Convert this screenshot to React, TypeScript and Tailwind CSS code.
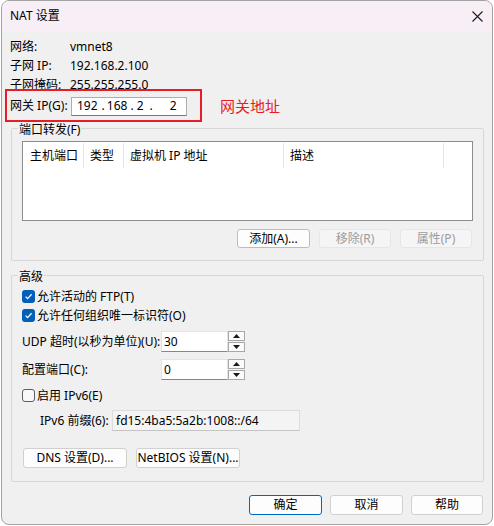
import React from "react";

function Check({ checked }: { checked: boolean }) {
  if (checked) {
    return (
      <div className="w-[13px] h-[13px] rounded-[3px] bg-[#005fb8] flex items-center justify-center shrink-0">
        <svg width="9" height="9" viewBox="0 0 9 9">
          <path d="M1.6 4.6 L3.6 6.6 L7.6 2.2" stroke="white" strokeWidth="1.3" fill="none" />
        </svg>
      </div>
    );
  }
  return <div className="w-[13px] h-[13px] rounded-[3px] border border-[#5d5d5d] bg-[#f8f8f8] shrink-0" />;
}

function Spin({ value }: { value: string }) {
  return (
    <div className="flex h-[21px]">
      <div className="w-[67px] h-full bg-white border border-[#e3e3e3] border-b-[#868686] flex items-center pl-[2px]">{value}</div>
      <div className="flex flex-col w-[17px] h-full justify-center gap-[1px]">
        <div className="h-[10px] border border-[#a8a8a8] bg-[#fbfbfb] flex items-center justify-center">
          <svg width="7" height="4" viewBox="0 0 7 4"><path d="M0 4 L3.5 0 L7 4 Z" fill="#1a1a1a" /></svg>
        </div>
        <div className="h-[10px] border border-[#a8a8a8] bg-[#fbfbfb] flex items-center justify-center">
          <svg width="7" height="4" viewBox="0 0 7 4"><path d="M0 0 L3.5 4 L7 0 Z" fill="#1a1a1a" /></svg>
        </div>
      </div>
    </div>
  );
}

export default function App() {
  return (
    <div className="w-[494px] h-[526px] bg-white font-['Noto_Sans','Noto_Sans_CJK_SC',sans-serif] text-[12px] text-black leading-none">
      <div className="relative ml-[1px] w-[492px] h-[525px] border border-[#a3a3a3] rounded-[8px] overflow-hidden bg-[#f0f0f0] flex flex-col">
        {/* title bar */}
        <div className="h-[30px] bg-[#f8eef6] flex items-center justify-between pl-[8px] pr-[9px] shrink-0">
          <span className="text-[12px]">NAT 设置</span>
          <svg width="11" height="11" viewBox="0 0 11 11">
            <path d="M0.5 0.5 L10.5 10.5 M10.5 0.5 L0.5 10.5" stroke="#1a1a1a" strokeWidth="1.1" />
          </svg>
        </div>

        {/* body */}
        <div className="flex flex-col pl-[8px] pr-[8px] pt-[6px]">
          <div className="flex items-center h-[19px]">
            <span className="w-[60px]">网络:</span>
            <span>vmnet8</span>
          </div>
          <div className="flex items-center h-[19px]">
            <span className="w-[60px]">子网 IP:</span>
            <span>192.168.2.100</span>
          </div>
          <div className="flex items-center h-[19px]">
            <span className="w-[60px]">子网掩码:</span>
            <span>255.255.255.0</span>
          </div>
          <div className="flex items-center h-[20px] mt-[2px]">
            <span className="w-[61px]">网关 IP(G):</span>
            <div className="w-[116px] h-[19px] bg-white border border-[#adadad] border-b-[#7a7a7a] flex items-center text-[12px]">
              <span className="ml-[5px]">192</span>
              <span className="ml-[4px]">.</span>
              <span className="ml-[2px]">168</span>
              <span className="ml-[3px]">.</span>
              <span className="ml-[3px]">2</span>
              <span className="ml-[6px]">.</span>
              <span className="ml-[17px]">2</span>
            </div>
            <span className="ml-[33px] text-[15px] text-[#e81c24]">网关地址</span>
          </div>

          {/* port forwarding group */}
          <div className="relative ml-[1px] mt-[12px] h-[133px] border border-[#d7d7d7] rounded-[2px] px-[10px] pt-[12px]">
            <span className="absolute left-[6px] top-[-5px] bg-[#f0f0f0] px-[1px]">端口转发(F)</span>
            <div className="h-[80px] bg-white border border-[#8d8d8d]">
              <div className="flex h-[25px] mt-[1px] items-center">
                <div className="w-[61px] h-full border-r border-[#e3e3e3] flex items-center pl-[7px]">主机端口</div>
                <div className="w-[40px] h-full border-r border-[#e3e3e3] flex items-center pl-[6px]">类型</div>
                <div className="w-[160px] h-full border-r border-[#e3e3e3] flex items-center pl-[6px]">虚拟机 IP 地址</div>
                <div className="w-[160px] h-full border-r border-[#e3e3e3] flex items-center pl-[6px]">描述</div>
              </div>
            </div>
            <div className="flex justify-end gap-[9px] mt-[8px] pr-[1px]">
              <div className="w-[73px] h-[19px] rounded-[3px] bg-[#fdfdfd] border border-[#bcbcbc] flex items-center justify-center">添加(A)...</div>
              <div className="w-[72px] h-[19px] rounded-[3px] bg-[#f5f5f5] border border-[#e6e6e6] text-[#9c9c9c] flex items-center justify-center">移除(R)</div>
              <div className="w-[72px] h-[19px] rounded-[3px] bg-[#f5f5f5] border border-[#e6e6e6] text-[#9c9c9c] flex items-center justify-center">属性(P)</div>
            </div>
          </div>

          {/* advanced group */}
          <div className="relative ml-[1px] mt-[14px] h-[207px] border border-[#d7d7d7] rounded-[2px] px-[10px] pt-[11px] flex flex-col">
            <span className="absolute left-[6px] top-[-5px] bg-[#f0f0f0] px-[1px]">高级</span>
            <div className="flex items-center h-[19px] gap-[2px]">
              <Check checked />
              <span>允许活动的 FTP(T)</span>
            </div>
            <div className="flex items-center h-[19px] gap-[2px]">
              <Check checked />
              <span>允许任何组织唯一标识符(O)</span>
            </div>
            <div className="flex items-center mt-[6px] h-[21px]">
              <span className="w-[139px]">UDP 超时(以秒为单位)(U):</span>
              <Spin value="30" />
            </div>
            <div className="flex items-center mt-[7px] h-[21px]">
              <span className="w-[139px]">配置端口(C):</span>
              <Spin value="0" />
            </div>
            <div className="flex items-center h-[19px] mt-[6px] gap-[2px]">
              <Check checked={false} />
              <span>启用 IPv6(E)</span>
            </div>
            <div className="flex items-center h-[21px] mt-[5px]">
              <span className="ml-[18px] w-[72px]">IPv6 前缀(6):</span>
              <div className="w-[188px] h-[21px] bg-[#f4f4f4] border border-[#dcdcdc] border-b-[#c4c4c4] flex items-center pl-[3px]">fd15:4ba5:5a2b:1008::/64</div>
            </div>
            <div className="flex gap-[9px] mt-[17px] ml-[1px]">
              <div className="w-[104px] h-[20px] rounded-[3px] bg-[#fdfdfd] border border-[#d0d0d0] flex items-center justify-center">DNS 设置(D)...</div>
              <div className="w-[104px] h-[20px] rounded-[3px] bg-[#fdfdfd] border border-[#d0d0d0] flex items-center justify-center">NetBIOS 设置(N)...</div>
            </div>
          </div>

          {/* bottom buttons */}
          <div className="flex justify-end gap-[8px] mt-[13px] pr-[1px]">
            <div className="w-[73px] h-[20px] rounded-[3px] bg-[#fdfdfd] border border-[#0067c0] flex items-center justify-center">确定</div>
            <div className="w-[73px] h-[20px] rounded-[3px] bg-[#fdfdfd] border border-[#d0d0d0] flex items-center justify-center">取消</div>
            <div className="w-[72px] h-[20px] rounded-[3px] bg-[#fdfdfd] border border-[#d0d0d0] flex items-center justify-center">帮助</div>
          </div>
        </div>

        {/* red annotation box */}
        <div className="absolute left-[3px] top-[88px] w-[197px] h-[33px] border-2 border-[#e81c24] pointer-events-none" />
      </div>
    </div>
  );
}
